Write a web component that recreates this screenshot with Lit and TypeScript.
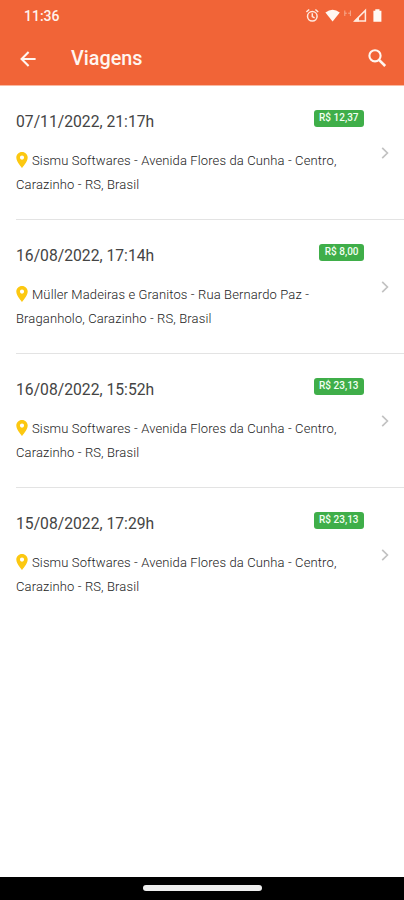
import { LitElement, html, css } from "lit";
import { customElement, property } from "lit/decorators.js";

interface Trip {
  date: string;
  price: string;
  address: string;
}

const OFFICE = "Sismu Softwares - Avenida Flores da Cunha - Centro, Carazinho - RS, Brasil";

const TRIPS: Trip[] = [
  { date: "07/11/2022, 21:17h", price: "R$ 12,37", address: OFFICE },
  {
    date: "16/08/2022, 17:14h",
    price: "R$ 8,00",
    address: "Müller Madeiras e Granitos - Rua Bernardo Paz - Braganholo, Carazinho - RS, Brasil",
  },
  { date: "16/08/2022, 15:52h", price: "R$ 23,13", address: OFFICE },
  { date: "15/08/2022, 17:29h", price: "R$ 23,13", address: OFFICE },
];

@customElement("status-bar")
export class StatusBar extends LitElement {
  static styles = css`
    :host {
      display: flex;
      align-items: center;
      justify-content: space-between;
      height: 32px;
      padding: 0 20px 0 24px;
      color: #fff3ec;
    }
    .clock {
      font-size: 14px;
      font-weight: 500;
    }
    svg {
      display: block;
    }
  `;

  render() {
    return html`
      <span class="clock">11:36</span>
      <svg width="78" height="16" viewBox="306 8 78 16" fill="none">
        <g stroke="#ffe9de" stroke-width="1.5">
          <circle cx="312.3" cy="16.3" r="4.8" />
          <path d="M312.3 13.2v3.4l2.3 1.3M306.4 12l2.8-2.5M318.2 12l-2.8-2.5" />
        </g>
        <path fill="#fff8f2" d="M325.4 12.6q7.2-5.8 14.4 0L332.6 21.6z" />
        <path stroke="#f7ac8f" stroke-width="1" d="M344.8 10.5v5.5M344.8 13.2h2M348.2 13.2h2M350.4 10.5v5.5" />
        <path stroke="#ffeade" stroke-width="1.5" d="M354.8 20.9h10.6V10.4z" />
        <path fill="#ffeade" d="M354 21.6l5-5v5z" />
        <path fill="#fffaf4" d="M373.4 10.8h1.9V9.2h4.2v1.6h1.9v11h-8z" />
      </svg>
    `;
  }
}

@customElement("title-bar")
export class TitleBar extends LitElement {
  static styles = css`
    :host {
      display: flex;
      align-items: center;
      height: 53px;
      padding: 0 17px 0 20px;
      color: #fff6f0;
    }
    h1 {
      flex: 1;
      margin: 0 0 0 35px;
      font-size: 19.8px;
      line-height: 24px;
      font-weight: 500;
    }
    svg {
      display: block;
    }
    .search {
      margin-bottom: 1px;
    }
  `;

  render() {
    return html`
      <svg width="16" height="18" viewBox="0 0 16 18" fill="none" stroke="currentColor" stroke-width="2.1">
        <path d="M15.6 9H2M8.6 2L1.6 9l7 7" />
      </svg>
      <h1>Viagens</h1>
      <svg class="search" width="20" height="20" viewBox="0 0 20 20" fill="none" stroke="currentColor">
        <circle cx="8" cy="7.8" r="5.6" stroke-width="2.1" />
        <path d="M12 11.8l6.2 6.2" stroke-width="2.6" />
      </svg>
    `;
  }
}

@customElement("trip-row")
export class TripRow extends LitElement {
  static styles = css`
    :host {
      display: flex;
      box-sizing: border-box;
      height: 134px;
      margin-left: 16px;
      padding-right: 14px;
      border-bottom: 1.5px solid #e3e3e3;
    }
    :host(:last-of-type) {
      border-color: transparent;
    }
    .body {
      flex: 1;
      padding-right: 16px;
    }
    .head {
      display: flex;
      justify-content: space-between;
      align-items: flex-start;
      height: 63px;
      padding-top: 24px;
      box-sizing: border-box;
    }
    .date {
      font-size: 15.7px;
      line-height: 24px;
      color: #444;
    }
    .price {
      height: 17px;
      padding: 0 5.5px;
      border-radius: 3px;
      background: #3fae49;
      color: #f2fff2;
      font-size: 10px;
      line-height: 16.5px;
      font-weight: 500;
    }
    .address {
      margin: 0;
      width: 330px;
      font-size: 13px;
      font-weight: 300;
      line-height: 24px;
      color: #222;
      letter-spacing: 0.125px;
    }
    .pin {
      vertical-align: -3px;
      margin-right: 4px;
    }
    .chevron {
      align-self: center;
      flex: none;
    }
  `;

  @property({ attribute: false }) trip!: Trip;

  render() {
    return html`
      <div class="body">
        <div class="head">
          <span class="date">${this.trip.date}</span>
          <span class="price">${this.trip.price}</span>
        </div>
        <p class="address"><svg class="pin" width="12" height="16" viewBox="0 0 12 16"><path fill="#fcc811" fill-rule="evenodd" d="M6 0C2.7 0 .3 2.5.3 5.6.3 9.8 6 16 6 16s5.7-6.2 5.7-10.4C11.7 2.5 9.3 0 6 0zm0 7.7a2.1 2.1 0 1 1 0-4.2 2.1 2.1 0 0 1 0 4.2z" /></svg>${this.trip.address}</p>
      </div>
      <svg class="chevron" width="10" height="12" viewBox="0 0 10 12" fill="none" stroke="#c2c2c2" stroke-width="1.7">
        <path d="M2.2.9L7.4 6l-5.2 5.1" />
      </svg>
    `;
  }
}

@customElement("app-root")
export class AppRoot extends LitElement {
  static styles = css`
    :host {
      display: flex;
      flex-direction: column;
      height: 900px;
      background: #fff;
      font-family: Roboto, sans-serif;
    }
    header {
      background: #f16437;
      border-bottom: 1px solid #f9b9a1;
    }
    main {
      flex: 1;
    }
    footer {
      display: flex;
      justify-content: center;
      align-items: flex-start;
      height: 23px;
      padding: 7.5px 0 0 1px;
      box-sizing: border-box;
      background: #000;
    }
    .handle {
      width: 119px;
      height: 6px;
      border-radius: 3px;
      background: #eee;
    }
  `;

  render() {
    return html`
      <header>
        <status-bar></status-bar>
        <title-bar></title-bar>
      </header>
      <main>${TRIPS.map((trip) => html`<trip-row .trip=${trip}></trip-row>`)}</main>
      <footer><div class="handle"></div></footer>
    `;
  }
}
